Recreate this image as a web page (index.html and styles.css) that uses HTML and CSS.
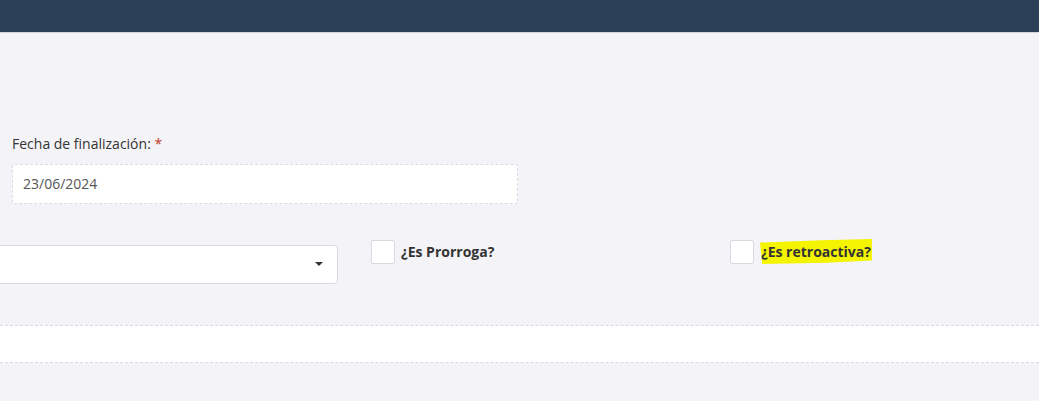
FILE: index.html
```html
<!DOCTYPE html>
<html lang="es">
<head>
    <meta charset="UTF-8">
    <meta name="viewport" content="width=device-width, initial-scale=1.0">
    <title>Contrato</title>
    <link rel="stylesheet" href="styles.css">
</head>
<body>
    <header class="topbar"></header>

    <main class="content">
        <div class="form-row">
            <div class="field">
                <label class="field-label">Fecha de finalización: <span class="required">*</span></label>
                <div class="date-input">23/06/2024</div>
            </div>
        </div>

        <div class="form-row options">
            <div class="select-col">
                <div class="select-box">
                    <span class="caret"></span>
                </div>
            </div>
            <div class="check-col">
                <span class="checkbox"></span>
                <span class="check-label">¿Es Prorroga?</span>
            </div>
            <div class="check-col">
                <span class="checkbox"></span>
                <span class="check-label"><mark class="highlight">¿Es retroactiva?</mark></span>
            </div>
        </div>
    </main>

    <div class="band"></div>
</body>
</html>
```

FILE: styles.css
```css
body {
    margin: 0;
    background: #f4f3f8;
    font-family: "Open Sans", "Liberation Sans", sans-serif;
    color: #333;
    overflow: hidden;
}
.topbar {
    height: 32px;
    background: #2b3f56;
    border-bottom: 1px solid #d6d6d6;
}
.content {
    padding: 101px 0 0 12px;
}
.field {
    width: 506px;
}
.field-label {
    display: block;
    font-size: 14px;
    line-height: 20px;
    color: #333;
    margin-bottom: 10px;
}
.required {
    color: #c0392b;
}
.date-input {
    box-sizing: border-box;
    height: 40px;
    padding: 0 10px;
    background: white;
    border: 1px dashed #d9d9e0;
    border-radius: 3px;
    font-size: 14px;
    line-height: 38px;
    color: #555;
}
.options {
    display: grid;
    grid-template-columns: 393px 359px 1fr;
    margin: 36px 0 0 -34px;
}
.select-box {
    position: relative;
    box-sizing: border-box;
    width: 360px;
    height: 39px;
    margin-top: 5px;
    background: white;
    border: 1px solid #d9d9df;
    border-radius: 4px;
}
.caret {
    position: absolute;
    right: 14px;
    top: 16px;
    border-left: 4px solid transparent;
    border-right: 4px solid transparent;
    border-top: 4px solid #333;
}
.check-col {
    display: flex;
    align-items: flex-start;
    gap: 6px;
}
.checkbox {
    box-sizing: border-box;
    width: 24px;
    height: 24px;
    background: white;
    border: 1px solid #d9d9df;
    border-radius: 2px;
}
.check-label {
    font-size: 14px;
    font-weight: bold;
    line-height: 20px;
    padding-top: 2px;
}
.highlight {
    background: #f4f400;
    color: #333;
    padding: 3px 1px 3px;
    clip-path: polygon(0 14%, 55% 5%, 100% 0, 100% 86%, 60% 95%, 2% 100%);
}
.band {
    box-sizing: border-box;
    height: 38px;
    margin-top: 41px;
    background: white;
    border-top: 1px dashed #d9d9e0;
    border-bottom: 1px dashed #d9d9e0;
}
```
